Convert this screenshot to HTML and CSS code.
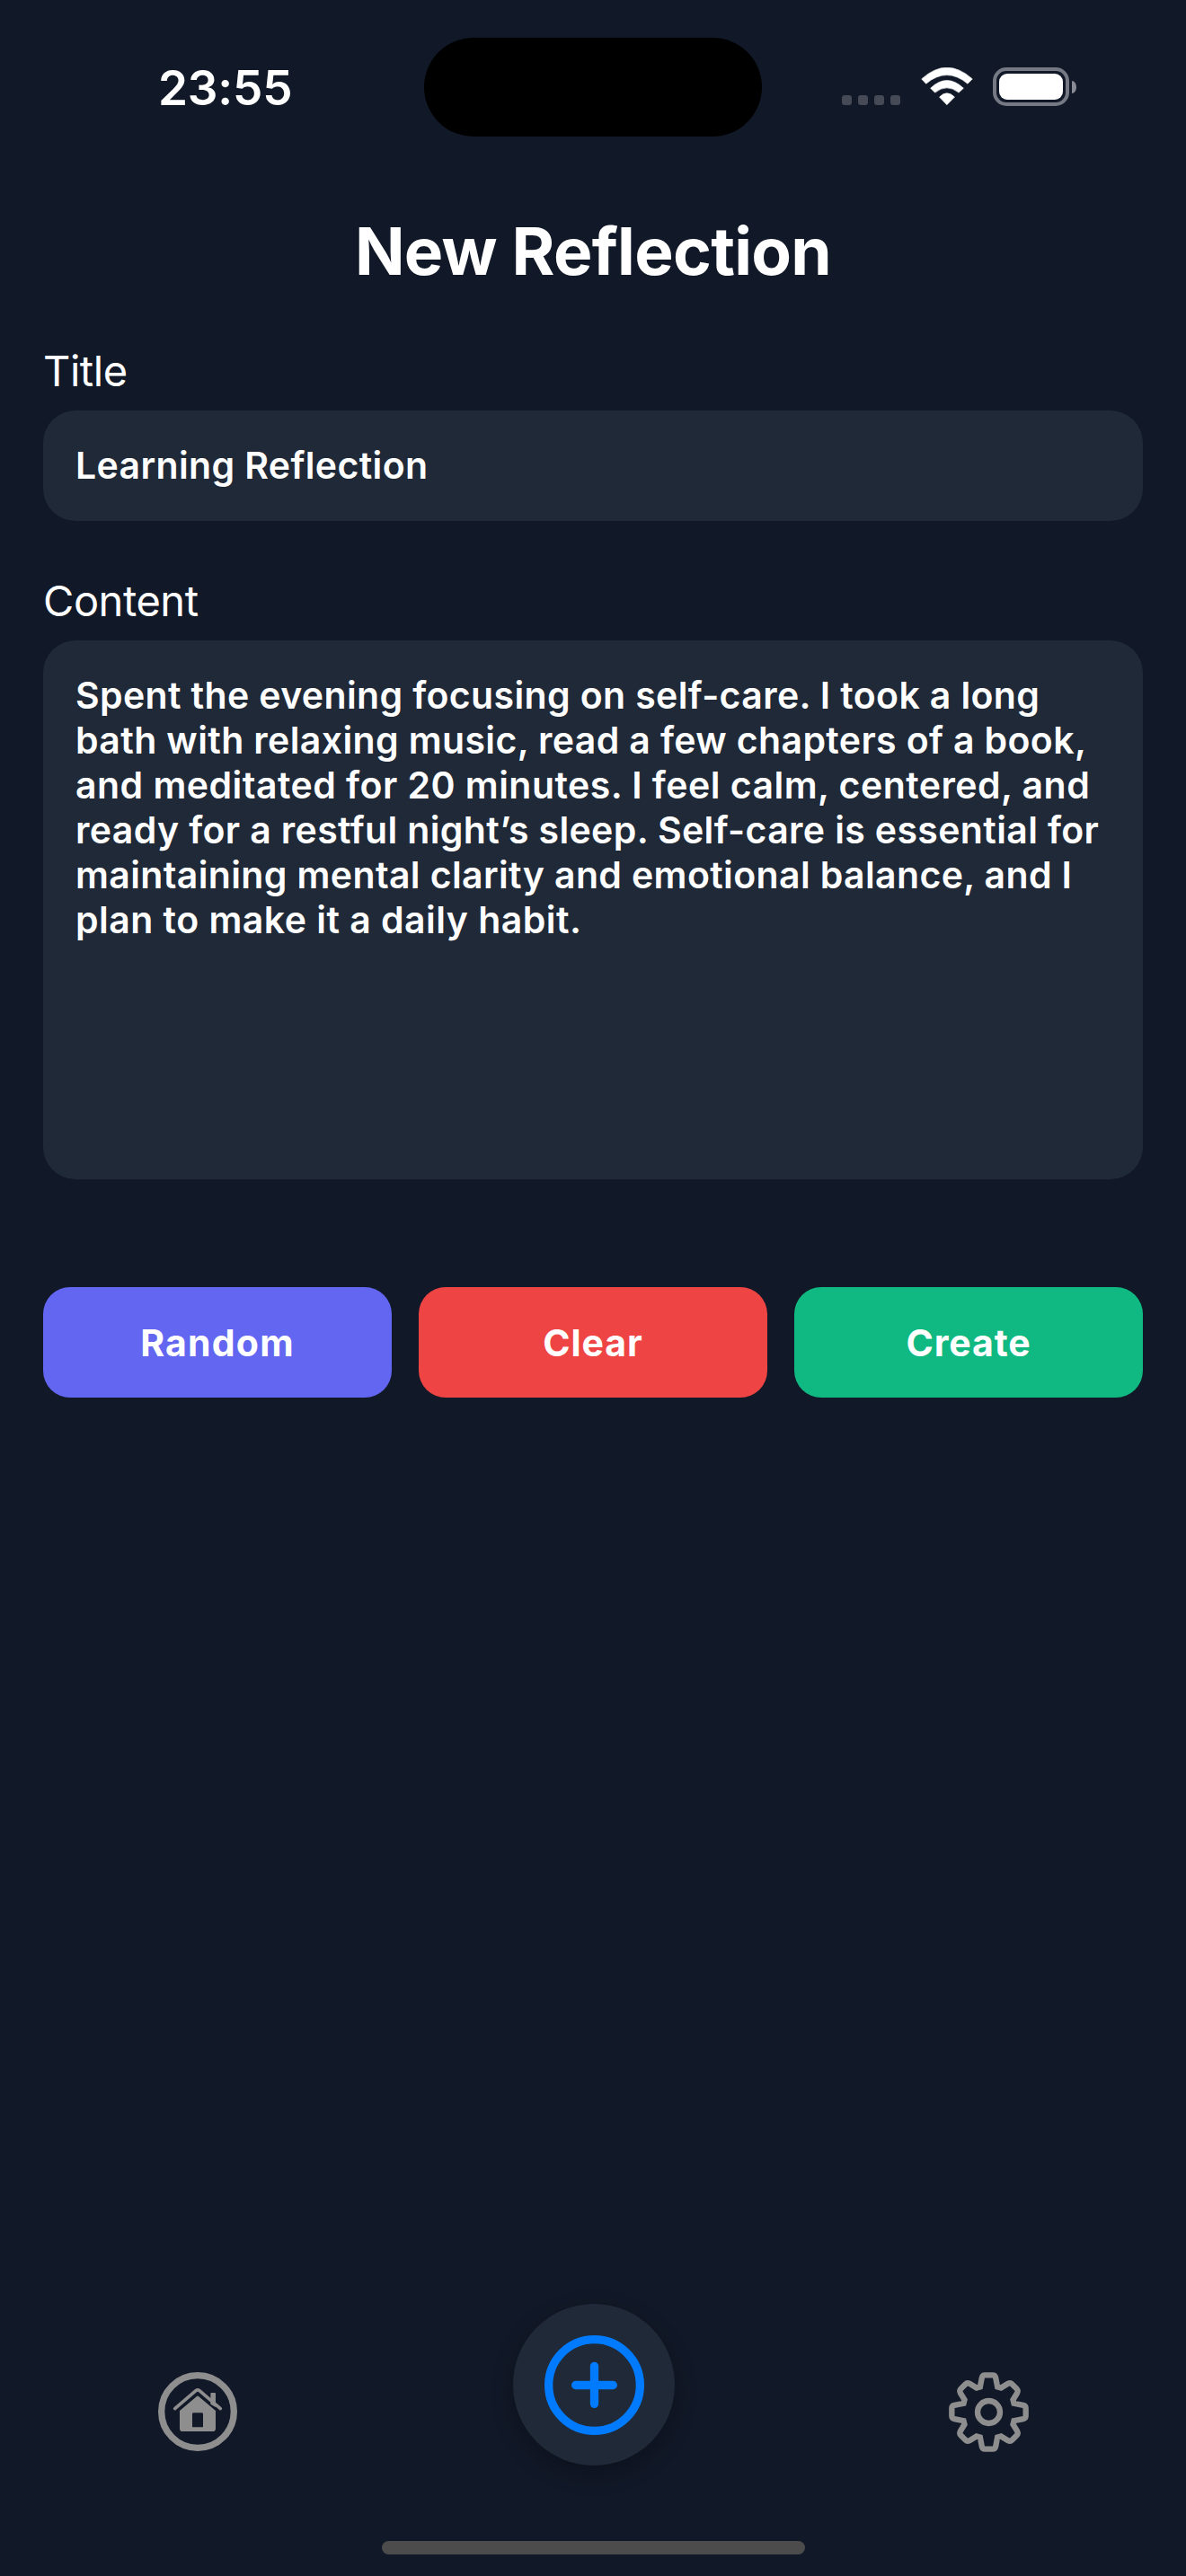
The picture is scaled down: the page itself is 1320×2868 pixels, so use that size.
FILE: index.html
```html
<!DOCTYPE html>
<html lang="en">
<head>
<meta charset="utf-8">
<title>New Reflection</title>
<link rel="stylesheet" href="styles.css">
</head>
<body>
<div class="screen">
  <header class="status-bar">
    <div class="status-side"><span class="clock">23:55</span></div>
    <div class="island"></div>
    <div class="status-side status-icons">
      <div class="signal"><i></i><i></i><i></i><i></i></div>
      <svg class="wifi" viewBox="614 165 173 127">
        <path d="M615 204Q700 127 786 204L770 220Q700 162 630 220Z"/>
        <path d="M645 235Q700 183 756 235L740 250Q700 218 660 250Z"/>
        <path d="M675 265Q700 239 726 265L700 291Z"/>
      </svg>
      <div class="battery"><div class="battery-case"><div class="battery-level"></div></div><div class="battery-tip"></div></div>
    </div>
  </header>

  <main class="content">
    <h1 class="heading">New Reflection</h1>
    <section class="field">
      <div class="label">Title</div>
      <div class="input">Learning Reflection</div>
    </section>
    <section class="field">
      <div class="label">Content</div>
      <div class="input textarea">
        <span class="line">Spent the evening focusing on self-care. I took a long</span>
        <span class="line">bath with relaxing music, read a few chapters of a book,</span>
        <span class="line line-wide">and meditated for 20 minutes. I feel calm, centered, and</span>
        <span class="line">ready for a restful night’s sleep. Self-care is essential for</span>
        <span class="line">maintaining mental clarity and emotional balance, and I</span>
        <span class="line line-wide">plan to make it a daily habit.</span>
      </div>
    </section>
    <div class="actions">
      <button class="btn btn-random">Random</button>
      <button class="btn btn-clear">Clear</button>
      <button class="btn btn-create">Create</button>
    </div>
  </main>

  <nav class="tab-bar">
    <div class="tab">
      <svg class="icon-home" viewBox="78 93 264 264">
        <circle class="ring" cx="210" cy="225" r="121"/>
        <path class="roof" d="M134 215L204 155Q210 150 216 155L286 215"/>
        <path class="solid" d="M253 200V165Q253 162 256 162H267Q270 162 270 165V210Z"/>
        <path class="solid" fill-rule="evenodd" d="M150 222L207 174Q210 171 213 174L270 222V281Q270 291 260 291H160Q150 291 150 281ZM192 277H228V233Q228 229 224 229H196Q192 229 192 233Z"/>
      </svg>
    </div>
    <div class="tab">
      <div class="add">
        <svg class="icon-plus" viewBox="195 180 333 333">
          <circle cx="361.500" cy="346.500" r="152.500"/>
          <path d="M299 346.500H424M361.500 283V409"/>
        </svg>
      </div>
    </div>
    <div class="tab">
      <svg class="icon-gear" viewBox="-133.500 -133.500 267 267">
        <path d="M-29 -84L-23 -115Q-21 -123.500 -13 -123.500H13Q21 -123.500 23 -115L29 -84L41 -81L64 -95Q72 -99 78 -93L93 -78Q99 -72 95 -64L81 -41L84 -29L115 -23Q123.500 -21 123.500 -13V13Q123.500 21 115 23L84 29L81 41L95 64Q99 72 93 78L78 93Q72 99 64 95L41 81L29 84L23 115Q21 123.500 13 123.500H-13Q-21 123.500 -23 115L-29 84L-41 81L-64 95Q-72 99 -78 93L-93 78Q-99 72 -95 64L-81 41L-84 29L-115 23Q-123.500 21 -123.500 13V-13Q-123.500 -21 -115 -23L-84 -29L-81 -41L-95 -64Q-99 -72 -93 -78L-78 -93Q-72 -99 -64 -95L-41 -81Z"/>
        <circle r="37.500"/>
      </svg>
    </div>
  </nav>
  <div class="home-indicator"></div>
</div>
</body>
</html>
```
FILE: styles.css
```css
* { box-sizing: border-box; }

body {
  margin: 0;
  background: #111827;
  color: #fff;
  font-family: Inter, "Liberation Sans", sans-serif;
}

.screen {
  display: flex;
  flex-direction: column;
  width: 1320px;
  height: 2868px;
  overflow: hidden;
}

.status-bar {
  display: flex;
  height: 194px;
  padding-top: 42px;
}
.status-side { width: 472px; height: 110px; }
.clock {
  display: inline-block;
  margin: 24px 0 0 176px;
  font-size: 53px;
  font-weight: 600;
  line-height: 64px;
  letter-spacing: -0.2px;
}
.island {
  width: 376px;
  height: 110px;
  border-radius: 55px;
  background: #000;
}
.status-icons {
  display: flex;
  align-items: flex-start;
  padding: 33px 0 0 89px;
}
.signal { display: flex; gap: 7px; margin-top: 31px; }
.signal i {
  width: 11px;
  height: 11px;
  border-radius: 3px;
  background: #464956;
}
.wifi {
  width: 58px;
  height: 42px;
  margin-left: 22.500px;
  fill: #fff;
  stroke: #fff;
  stroke-width: 2;
  stroke-linejoin: round;
}
.battery { display: flex; align-items: center; gap: 3px; margin-left: 22.500px; }
.battery-case {
  width: 85px;
  height: 43px;
  padding: 3px;
  border: 4px solid #757984;
  border-radius: 15px;
}
.battery-level { width: 71px; height: 29px; border-radius: 9px; background: #fff; }
.battery-tip { width: 5px; height: 14px; border-radius: 0 5px 5px 0 / 0 7px 7px 0; background: #888b95; }

.content { flex: 1; min-height: 0; padding: 36px 48px 0; }

.heading {
  margin: 0 0 60px;
  font-size: 73px;
  font-weight: 700;
  line-height: 100px;
  letter-spacing: -0.7px;
  text-align: center;
}

.field { margin-bottom: 66px; }
.label {
  height: 67px;
  font-size: 47px;
  font-weight: 400;
  line-height: 46px;
  letter-spacing: -0.45px;
}
.input {
  height: 123px;
  padding: 36px;
  border-radius: 36px;
  background: #1f2937;
  font-size: 41px;
  font-weight: 600;
  line-height: 50px;
  letter-spacing: 0.37px;
  white-space: nowrap;
}
.textarea {
  display: flex;
  flex-direction: column;
  align-items: flex-start;
  height: 600px;
}
.line-wide { letter-spacing: 0.47px; }

.actions { display: flex; gap: 30px; margin-top: 120px; }
.btn {
  flex: 1;
  height: 123px;
  padding: 0;
  border: 0;
  border-radius: 30px;
  color: #fff;
  font: 700 41px/50px Inter, "Liberation Sans", sans-serif;
  letter-spacing: 0.9px;
}
.btn-random { background: #6366f1; letter-spacing: 1.2px; }
.btn-clear { background: #ef4444; }
.btn-create { background: #10b981; }

.tab-bar { display: flex; height: 264px; align-items: flex-start; }
.tab { flex: 1; display: flex; justify-content: center; }
.icon-home { width: 88px; height: 88px; margin-top: 76px; }
.icon-home .ring { fill: none; stroke: #8e8e8f; stroke-width: 22; }
.icon-home .roof { fill: none; stroke: #8e8e8f; stroke-width: 11; stroke-linecap: round; }
.icon-home .solid { fill: #8e8e8f; }
.add {
  display: flex;
  align-items: center;
  justify-content: center;
  width: 180px;
  height: 180px;
  margin-left: 2px;
  border-radius: 50%;
  background: #1f2937;
  box-shadow: 0 9px 24px rgba(0, 0, 0, 0.25);
}
.icon-plus {
  width: 111px;
  height: 111px;
  fill: none;
  stroke: #007bff;
  stroke-width: 28;
  stroke-linecap: round;
}
.icon-gear {
  width: 89px;
  height: 89px;
  margin: 76px 0 0 1px;
  fill: none;
  stroke: #8e8e8f;
  stroke-width: 19;
  stroke-linejoin: miter;
}

.home-indicator {
  width: 471px;
  height: 15px;
  margin: 0 auto 24px;
  border-radius: 8px;
  background: #4c4c4c;
}
```
